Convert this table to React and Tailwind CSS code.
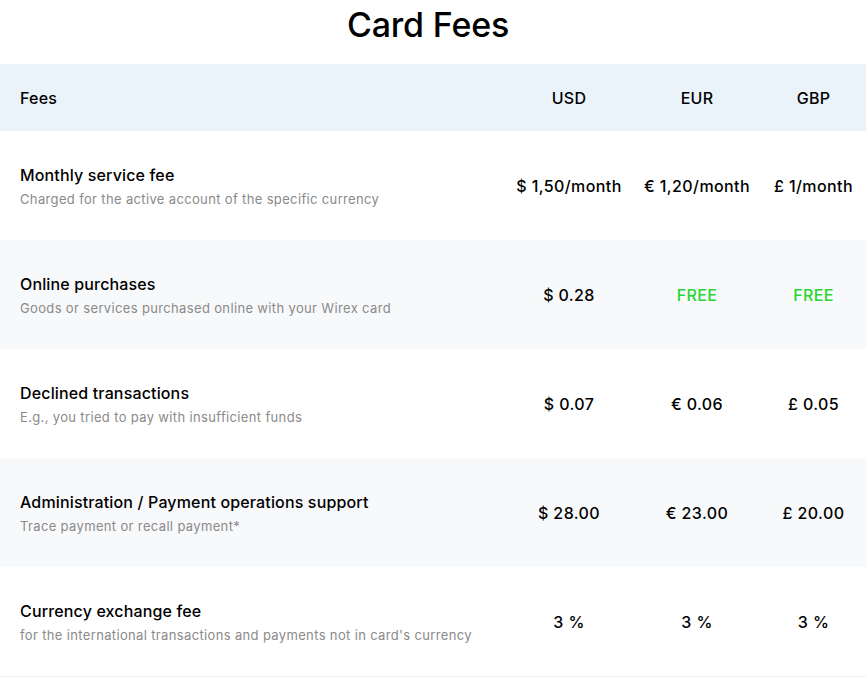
import React from 'react'

// Card fee rows: label, hint, and one value per currency
const rows = [
  {
    title: 'Monthly service fee',
    hint: 'Charged for the active account of the specific currency',
    values: ['$ 1,50/month', '€ 1,20/month', '£ 1/month'],
  },
  {
    title: 'Online purchases',
    hint: 'Goods or services purchased online with your Wirex card',
    values: ['$ 0.28', 'FREE', 'FREE'],
  },
  {
    title: 'Declined transactions',
    hint: 'E.g., you tried to pay with insufficient funds',
    values: ['$ 0.07', '€ 0.06', '£ 0.05'],
  },
  {
    title: 'Administration / Payment operations support',
    hint: 'Trace payment or recall payment*',
    values: ['$ 28.00', '€ 23.00', '£ 20.00'],
  },
  {
    title: 'Currency exchange fee',
    hint: "for the international transactions and payments not in card's currency",
    values: ['3 %', '3 %', '3 %'],
  },
]

const grid = 'grid grid-cols-[505px_128px_128px_105px]'

export default function App() {
  return (
    <div className="w-[868px] bg-white text-black" style={{ fontFamily: 'Inter, "Noto Sans", sans-serif' }}>
      <h1 className="h-16 flex items-start justify-center pt-[4px] pr-[12px] text-[34px] font-medium leading-[42px] tracking-[-0.2px]">
        Card Fees
      </h1>

      <div className="w-[866px] border-b border-[#eef0f3]">
        {/* Header */}
        <div className={`${grid} h-[67px] items-center bg-[#eaf2fa] text-[16px] font-medium tracking-[0.2px]`}>
          <div className="pl-5">Fees</div>
          <div className="text-center">USD</div>
          <div className="text-center">EUR</div>
          <div className="text-center">GBP</div>
        </div>

        {rows.map((row, i) => (
          <div
            key={row.title}
            className={`${grid} h-[109px] items-center ${i % 2 === 1 ? 'bg-[#f8f9fb]' : 'bg-white'}`}
          >
            <div className="pl-5">
              <div className="text-[16px] font-medium leading-5 tracking-[0.15px]">{row.title}</div>
              <div className="mt-[6px] text-[13px] leading-4 tracking-[0.35px] text-[#8a8a8a]">{row.hint}</div>
            </div>
            {row.values.map((v, j) => (
              <div
                key={j}
                className={`text-center text-[16px] font-medium tracking-[0.4px] whitespace-nowrap ${v === 'FREE' ? 'text-[#27d631]' : ''}`}
              >
                {v}
              </div>
            ))}
          </div>
        ))}
      </div>
    </div>
  )
}
